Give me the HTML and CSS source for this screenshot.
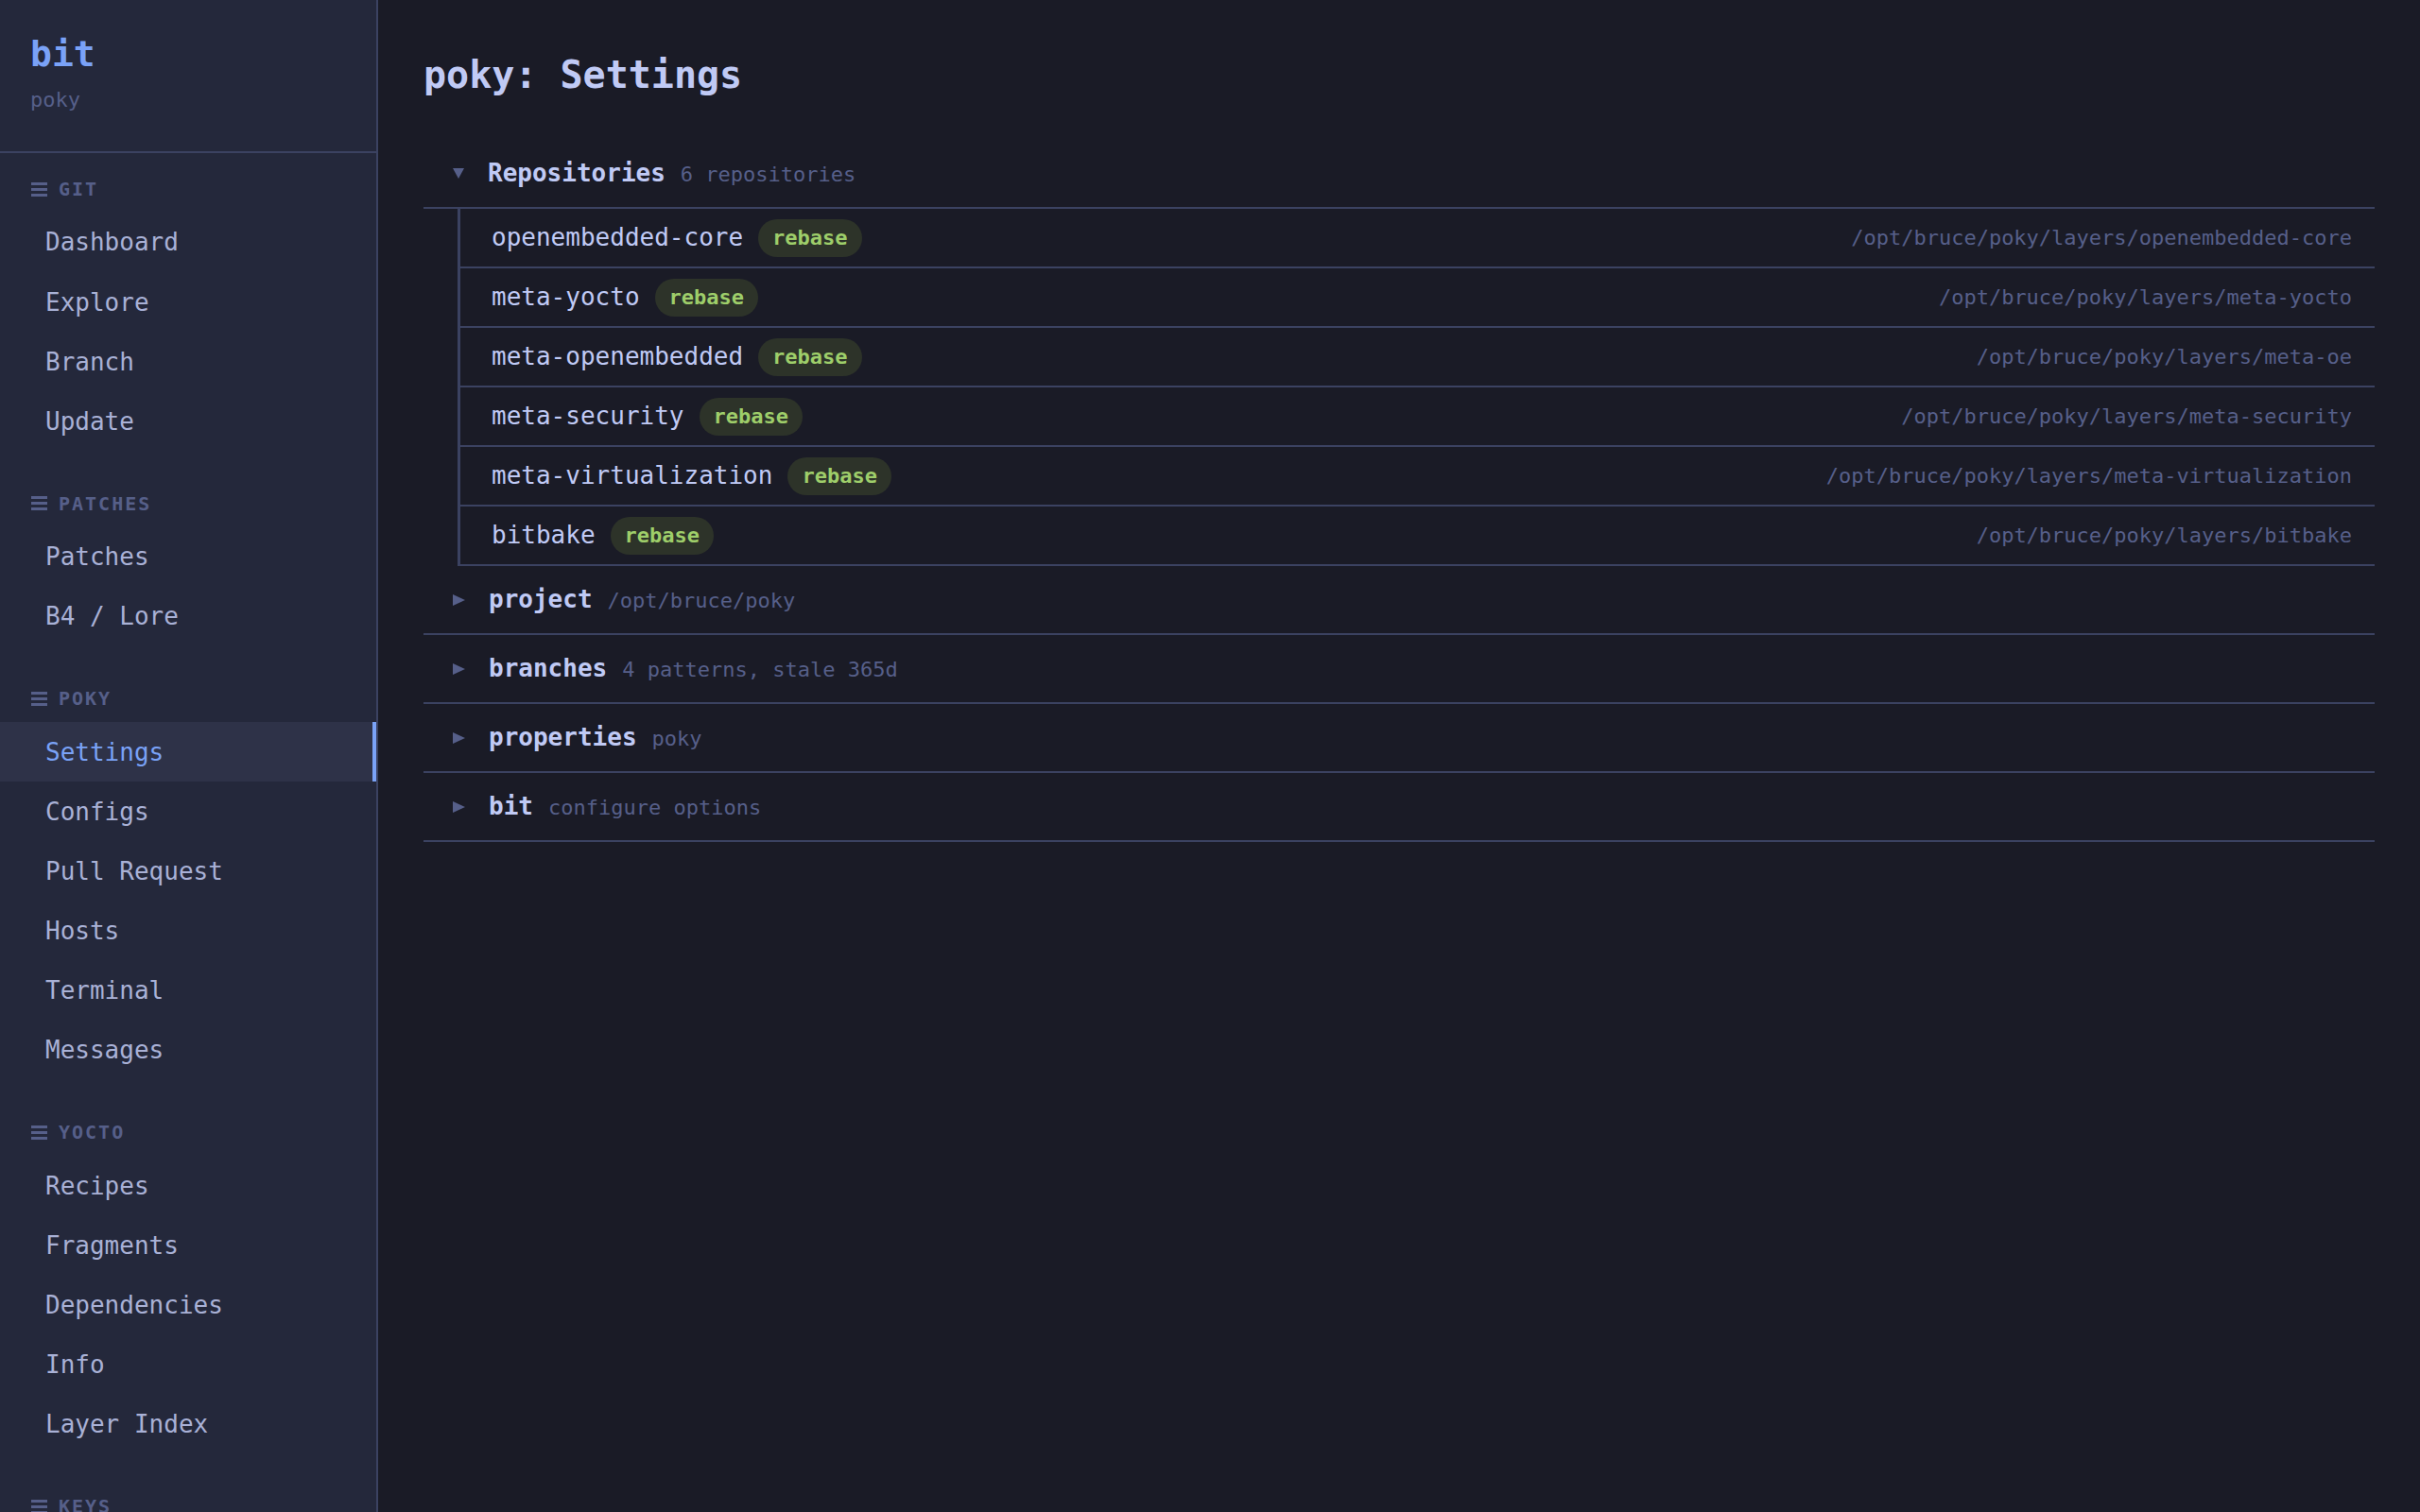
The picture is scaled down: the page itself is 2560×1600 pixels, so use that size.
FILE: index.html
```html
<!DOCTYPE html>
<html lang="en">
<head>
    <meta charset="UTF-8">
    <meta name="viewport" content="width=device-width, initial-scale=1.0">
    <title>bit - poky: Settings</title>
    <link rel="stylesheet" href="styles.css">
</head>
<body>

    <aside class="sidebar">
        <div class="brand">
            <div class="brand-name">bit</div>
            <div class="brand-sub">poky</div>
        </div>

        <nav class="nav">
            <div class="nav-section">
                <div class="nav-header"><svg class="nav-icon" viewBox="0 0 17 17"><rect y="1" width="17" height="3"/><rect y="7" width="17" height="3"/><rect y="13" width="17" height="3"/></svg>GIT</div>
                <a class="nav-item">Dashboard</a>
                <a class="nav-item">Explore</a>
                <a class="nav-item">Branch</a>
                <a class="nav-item">Update</a>
            </div>
            <div class="nav-section">
                <div class="nav-header"><svg class="nav-icon" viewBox="0 0 17 17"><rect y="1" width="17" height="3"/><rect y="7" width="17" height="3"/><rect y="13" width="17" height="3"/></svg>PATCHES</div>
                <a class="nav-item">Patches</a>
                <a class="nav-item">B4 / Lore</a>
            </div>
            <div class="nav-section">
                <div class="nav-header"><svg class="nav-icon" viewBox="0 0 17 17"><rect y="1" width="17" height="3"/><rect y="7" width="17" height="3"/><rect y="13" width="17" height="3"/></svg>POKY</div>
                <a class="nav-item active">Settings</a>
                <a class="nav-item">Configs</a>
                <a class="nav-item">Pull Request</a>
                <a class="nav-item">Hosts</a>
                <a class="nav-item">Terminal</a>
                <a class="nav-item">Messages</a>
            </div>
            <div class="nav-section">
                <div class="nav-header"><svg class="nav-icon" viewBox="0 0 17 17"><rect y="1" width="17" height="3"/><rect y="7" width="17" height="3"/><rect y="13" width="17" height="3"/></svg>YOCTO</div>
                <a class="nav-item">Recipes</a>
                <a class="nav-item">Fragments</a>
                <a class="nav-item">Dependencies</a>
                <a class="nav-item">Info</a>
                <a class="nav-item">Layer Index</a>
            </div>
            <div class="nav-section">
                <div class="nav-header"><svg class="nav-icon" viewBox="0 0 17 17"><rect y="1" width="17" height="3"/><rect y="7" width="17" height="3"/><rect y="13" width="17" height="3"/></svg>KEYS</div>
                <a class="nav-item">Keys</a>
            </div>
        </nav>
    </aside>

    <main class="main">
        <h1 class="page-title">poky: Settings</h1>

        <details class="group" open>
            <summary><span class="group-title"><b>Repositories</b><span class="meta">6 repositories</span></span></summary>
            <div class="repo-list">
                <div class="repo">
                    <span class="repo-name">openembedded-core</span>
                    <span class="badge">rebase</span>
                    <span class="repo-path">/opt/bruce/poky/layers/openembedded-core</span>
                </div>
                <div class="repo">
                    <span class="repo-name">meta-yocto</span>
                    <span class="badge">rebase</span>
                    <span class="repo-path">/opt/bruce/poky/layers/meta-yocto</span>
                </div>
                <div class="repo">
                    <span class="repo-name">meta-openembedded</span>
                    <span class="badge">rebase</span>
                    <span class="repo-path">/opt/bruce/poky/layers/meta-oe</span>
                </div>
                <div class="repo">
                    <span class="repo-name">meta-security</span>
                    <span class="badge">rebase</span>
                    <span class="repo-path">/opt/bruce/poky/layers/meta-security</span>
                </div>
                <div class="repo">
                    <span class="repo-name">meta-virtualization</span>
                    <span class="badge">rebase</span>
                    <span class="repo-path">/opt/bruce/poky/layers/meta-virtualization</span>
                </div>
                <div class="repo">
                    <span class="repo-name">bitbake</span>
                    <span class="badge">rebase</span>
                    <span class="repo-path">/opt/bruce/poky/layers/bitbake</span>
                </div>
            </div>
        </details>

        <details class="group">
            <summary><span class="group-title"><b>project</b><span class="meta">/opt/bruce/poky</span></span></summary>
        </details>
        <details class="group">
            <summary><span class="group-title"><b>branches</b><span class="meta">4 patterns, stale 365d</span></span></summary>
        </details>
        <details class="group">
            <summary><span class="group-title"><b>properties</b><span class="meta">poky</span></span></summary>
        </details>
        <details class="group">
            <summary><span class="group-title"><b>bit</b><span class="meta">configure options</span></span></summary>
        </details>
    </main>

</body>
</html>
```

FILE: styles.css
```css
* {
    box-sizing: border-box;
}
body {
    margin: 0;
    height: 100vh;
    display: flex;
    overflow: hidden;
    font-family: "DejaVu Sans Mono", "Liberation Mono", monospace;
    background-color: #1a1b26;
    color: #c0caf5;
}

/* sidebar */
.sidebar {
    width: 400px;
    flex-shrink: 0;
    height: 100vh;
    overflow: hidden;
    background-color: #24283b;
    border-right: 2px solid #3b4261;
}
.brand {
    padding: 35px 32px 38px;
    border-bottom: 2px solid #3b4261;
}
.brand-name {
    font-size: 38px;
    line-height: 44px;
    font-weight: bold;
    color: #7aa2f7;
}
.brand-sub {
    margin-top: 10px;
    font-size: 22px;
    line-height: 33px;
    color: #565f89;
}
.nav {
    padding-top: 23px;
}
.nav-section + .nav-section {
    margin-top: 40px;
}
.nav-header {
    display: flex;
    align-items: center;
    padding-left: 33px;
    margin-bottom: 10px;
    font-size: 20px;
    line-height: 30px;
    font-weight: bold;
    letter-spacing: 2px;
    color: #565f89;
}
.nav-icon {
    width: 17px;
    height: 17px;
    margin-right: 12px;
    fill: #565f89;
}
.nav-item {
    display: block;
    padding: 12.4px 0 12.4px 48px;
    font-size: 26px;
    line-height: 38.4px;
    color: #a9b1d6;
    cursor: pointer;
}
.nav-item.active {
    background-color: #2e3248;
    color: #7aa2f7;
    border-right: 4px solid #7aa2f7;
}

/* main */
.main {
    flex: 1;
    padding: 56px 48px 48px;
    overflow: auto;
}
.page-title {
    margin: 0 0 45px;
    font-size: 40px;
    line-height: 47px;
    font-weight: bold;
    color: #c0caf5;
}
.group summary {
    display: flex;
    align-items: center;
    list-style: none;
    padding: 15.5px 0 15.5px 31px;
    border-bottom: 2px solid #3b4261;
    font-size: 26px;
    line-height: 39px;
    cursor: pointer;
}
.group summary::-webkit-details-marker {
    display: none;
}
.group summary::before {
    content: "";
    width: 0;
    height: 0;
    margin-right: 25px;
    border-left: 13px solid #565f89;
    border-top: 6.5px solid transparent;
    border-bottom: 6.5px solid transparent;
}
.group[open] summary::before {
    border-top: 11px solid #565f89;
    border-left: 6.5px solid transparent;
    border-right: 6.5px solid transparent;
    border-bottom: 0;
}
.group-title b {
    color: #c0caf5;
}
.meta {
    margin-left: 16px;
    font-size: 22px;
    color: #565f89;
}

/* repositories */
.repo-list {
    margin-left: 36px;
    border-left: 3px solid #3b4261;
    border-bottom: 2px solid #3b4261;
}
.repo {
    display: flex;
    align-items: center;
    padding: 10.5px 24px 10.5px 33px;
}
.repo + .repo {
    border-top: 2px solid #3b4261;
}
.repo-name {
    font-size: 26px;
    line-height: 39px;
    color: #c0caf5;
}
.badge {
    margin-left: 16px;
    padding: 0 15px;
    height: 40px;
    line-height: 40px;
    border-radius: 20px;
    font-size: 22px;
    font-weight: bold;
    color: #9ece6a;
    background-color: #2d3329;
}
.repo-path {
    margin-left: auto;
    font-size: 22px;
    color: #565f89;
}
```
